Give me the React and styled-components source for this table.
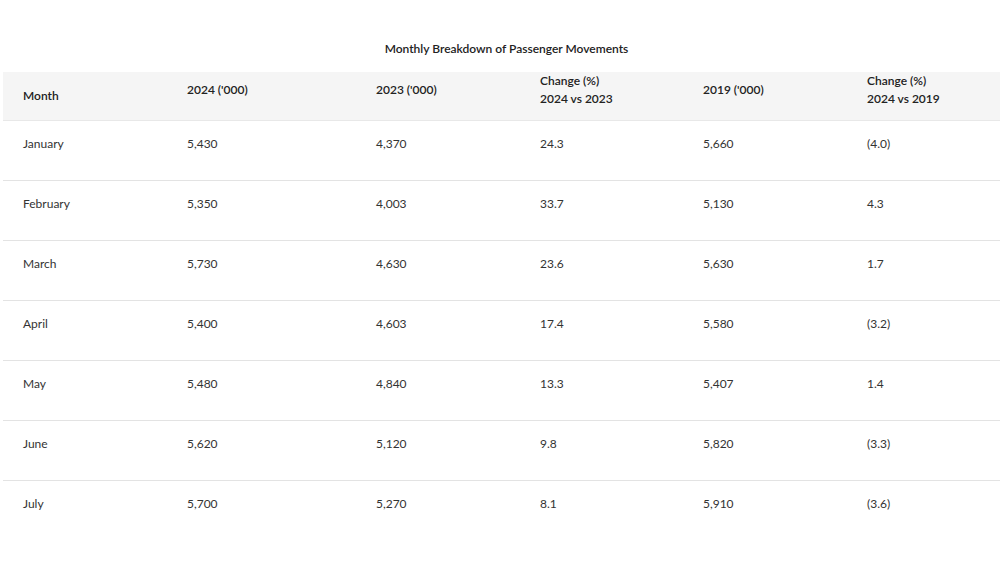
import React from 'react';
import styled, { createGlobalStyle } from 'styled-components';

const GlobalStyle = createGlobalStyle`
  html, body {
    margin: 0;
    padding: 0;
    background: #ffffff;
  }
  body {
    font-family: Lato, "Open Sans", Arial, sans-serif;
    color: #333333;
  }
`;

const Page = styled.div`
  width: 1000px;
  height: 575px;
  padding: 40px 0 0 3px;
  box-sizing: border-box;
`;

const Caption = styled.h2`
  margin: 0 0 14px;
  font-size: 12px;
  line-height: 18px;
  font-weight: 600;
  text-align: center;
  color: #222222;
  padding-left: 10px;
`;

const Table = styled.table`
  width: 997px;
  border-collapse: collapse;
  table-layout: fixed;
  font-size: 12px;
  line-height: 18px;
`;

const HeadRow = styled.tr`
  background: #f5f5f5;
  height: 48px;
`;

const Th = styled.th`
  padding: ${p => (p.$middle ? '0 20px' : '0 20px 12px')};
  text-align: left;
  vertical-align: middle;
  font-weight: 600;
  color: #222222;
  border-bottom: 1px solid #e8e8e8;
`;

const Row = styled.tr`
  height: 60px;
  border-bottom: ${p => (p.$last ? 'none' : '1px solid #e3e3e3')};
`;

const Td = styled.td`
  padding: 14px 20px 0;
  vertical-align: top;
  color: #333333;
`;

const columns = [
  { label: "Month", width: 164, middle: true },
  { label: "2024 ('000)", width: 189 },
  { label: "2023 ('000)", width: 164 },
  { label: ['Change (%)', '2024 vs 2023'], width: 163 },
  { label: "2019 ('000)", width: 164 },
  { label: ['Change (%)', '2024 vs 2019'], width: 153 },
];

const rows = [
  ['January', '5,430', '4,370', '24.3', '5,660', '(4.0)'],
  ['February', '5,350', '4,003', '33.7', '5,130', '4.3'],
  ['March', '5,730', '4,630', '23.6', '5,630', '1.7'],
  ['April', '5,400', '4,603', '17.4', '5,580', '(3.2)'],
  ['May', '5,480', '4,840', '13.3', '5,407', '1.4'],
  ['June', '5,620', '5,120', '9.8', '5,820', '(3.3)'],
  ['July', '5,700', '5,270', '8.1', '5,910', '(3.6)'],
];

export default function App() {
  return (
    <>
      <GlobalStyle />
      <Page>
        <Caption>Monthly Breakdown of Passenger Movements</Caption>
        <Table>
          <colgroup>
            {columns.map((c, i) => (
              <col key={i} style={{ width: c.width }} />
            ))}
          </colgroup>
          <thead>
            <HeadRow>
              {columns.map((c, i) => (
                <Th key={i} $middle={c.middle}>
                  {Array.isArray(c.label) ? (
                    <>
                      {c.label[0]}
                      <br />
                      {c.label[1]}
                    </>
                  ) : (
                    c.label
                  )}
                </Th>
              ))}
            </HeadRow>
          </thead>
          <tbody>
            {rows.map((r, i) => (
              <Row key={r[0]} $last={i === rows.length - 1}>
                {r.map((cell, j) => (
                  <Td key={j}>{cell}</Td>
                ))}
              </Row>
            ))}
          </tbody>
        </Table>
      </Page>
    </>
  );
}
